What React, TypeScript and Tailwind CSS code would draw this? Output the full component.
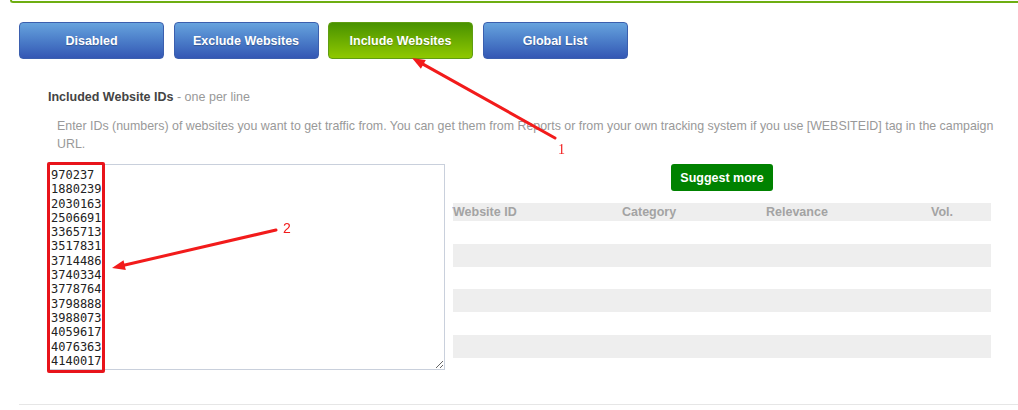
import React from "react";

const ids = [
  "970237",
  "1880239",
  "2030163",
  "2506691",
  "3365713",
  "3517831",
  "3714486",
  "3740334",
  "3778764",
  "3798888",
  "3988073",
  "4059617",
  "4076363",
  "4140017",
];

function Arrow({ x1, y1, x2, y2 }: { x1: number; y1: number; x2: number; y2: number }) {
  const dx = x2 - x1;
  const dy = y2 - y1;
  const len = Math.sqrt(dx * dx + dy * dy);
  const ux = dx / len;
  const uy = dy / len;
  const hl = 13;
  const hw = 5;
  const bx = x2 - ux * hl;
  const by = y2 - uy * hl;
  const px = -uy;
  const py = ux;
  const pts = `${x2},${y2} ${bx + px * hw},${by + py * hw} ${bx - px * hw},${by - py * hw}`;
  return (
    <g>
      <line x1={x1} y1={y1} x2={bx + ux * 2} y2={by + uy * 2} stroke="#f21b1b" strokeWidth={3} strokeLinecap="round" />
      <polygon points={pts} fill="#f21b1b" />
    </g>
  );
}

export default function App() {
  const blueBtn =
    "w-[145px] h-[37px] pt-[2px] rounded-[4px] border border-[#3b5fae] bg-gradient-to-b from-[#67a3dd] to-[#3457b4] text-white font-bold text-[12.5px] flex items-center justify-center [text-shadow:0_1px_1px_rgba(0,0,0,0.25)]";
  const greenBtn =
    "w-[145px] h-[37px] pt-[2px] rounded-[4px] border border-[#5f9d12] bg-gradient-to-b from-[#489200] to-[#8fc900] text-white font-bold text-[12.5px] flex items-center justify-center [text-shadow:0_1px_1px_rgba(0,0,0,0.25)]";

  return (
    <div className="relative w-[1018px] h-[410px] bg-white overflow-hidden" style={{ fontFamily: '"Liberation Sans", Arial, sans-serif' }}>
      <div className="ml-[10px] h-[3px] border-l-2 border-b-2 border-[#6eae12] rounded-bl-[4px]" />

      <div className="pl-[19px]">
        <div className="mt-[19px] flex gap-[9.5px]">
          <div className={blueBtn}>Disabled</div>
          <div className={blueBtn}>Exclude Websites</div>
          <div className={greenBtn}>Include Websites</div>
          <div className={blueBtn}>Global List</div>
        </div>

        <div className="pl-[29px] mt-[31px] text-[12.5px] leading-[15px]">
          <span className="font-bold text-[#444]">Included Website IDs</span>
          <span className="text-[#999]"> - one per line</span>
        </div>

        <div className="pl-[38px] mt-[12px] text-[12.4px] leading-[18px] text-[#999]">
          Enter IDs (numbers) of websites you want to get traffic from. You can get them from Reports or from your own tracking system if you use [WEBSITEID] tag in the campaign URL.
        </div>

        <div className="mt-[11px] pl-[29px] flex gap-[8px]">
          <textarea
            readOnly
            value={ids.join("\n")}
            className="w-[397px] h-[206px] border border-[#c9d0dc] bg-white px-[2px] pt-[3px] pb-[2px] text-[12px] leading-[14.3px] text-[#222] outline-none"
            style={{ fontFamily: '"DejaVu Sans Mono", "Liberation Mono", monospace' }}
          />
          <div className="w-[538px] flex flex-col">
            <div className="flex justify-center">
              <div className="w-[102px] h-[27px] pt-[1px] rounded-[3px] bg-[#008200] text-white font-bold text-[12.5px] flex items-center justify-center">
                Suggest more
              </div>
            </div>
            <div className="mt-[12px] h-[18px] bg-[#eeeeee] grid grid-cols-[169px_144px_165px_60px] items-center text-[12.5px] font-bold text-[#a3a3a3]">
              <div>Website ID</div>
              <div>Category</div>
              <div>Relevance</div>
              <div>Vol.</div>
            </div>
            <div className="h-[23px]" />
            <div className="h-[23px] bg-[#eeeeee]" />
            <div className="h-[22px]" />
            <div className="h-[23px] bg-[#eeeeee]" />
            <div className="h-[23px]" />
            <div className="h-[23px] bg-[#eeeeee]" />
          </div>
        </div>

        <div className="mt-[34px] h-px bg-[#e6e6e6]" />
      </div>

      <div className="absolute left-[47px] top-[162px] w-[58px] h-[211px] border-[3px] border-[#e8141b] rounded-[2px] pointer-events-none" />
      <svg className="absolute left-0 top-0 pointer-events-none" width={1018} height={410}>
        <Arrow x1={555} y1={138} x2={412} y2={58} />
        <Arrow x1={276} y1={230} x2={112} y2={268} />
        <text x={558} y={154} fill="#f21b1b" fontSize={14} fontFamily='"Liberation Serif", serif'>1</text>
        <text x={283} y={233} fill="#f21b1b" fontSize={14} fontFamily='"Liberation Sans", sans-serif'>2</text>
      </svg>
    </div>
  );
}
